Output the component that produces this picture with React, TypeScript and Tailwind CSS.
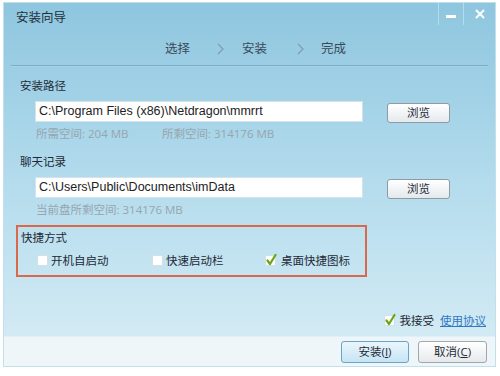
import React, { useState } from 'react';

const font = { fontFamily: '"Open Sans", "Noto Sans CJK SC", sans-serif' };

const CheckBox: React.FC<{ checked: boolean; onClick: () => void }> = ({ checked, onClick }) => (
  <span
    onClick={onClick}
    className="relative inline-block w-[11px] h-[11px] bg-white border border-[#d5e0e6] shadow-[inset_0_0_1px_#dfe7ec]"
  >
    {checked && (
      <svg className="absolute -left-[1px] -top-[3px]" width="13" height="14" viewBox="0 0 13 14">
        <path d="M2.5 7.5 L5 11 L10.5 2" fill="none" stroke="#6aa617" strokeWidth="2.2" strokeLinecap="round" strokeLinejoin="round" />
      </svg>
    )}
  </span>
);

const BrowseButton: React.FC = () => (
  <button className="w-[63px] h-[20px] rounded-[3px] border border-[#8c9ba6] bg-gradient-to-b from-white to-[#e4e9ed] text-[11.5px] text-[#1e2a36] leading-none shadow-[inset_0_1px_0_#fff]">
    浏览
  </button>
);

const Chevron: React.FC = () => (
  <svg width="7" height="12" viewBox="0 0 7 12">
    <path d="M1 1 L6 6 L1 11" fill="none" stroke="#7f9aab" strokeWidth="1.1" />
  </svg>
);

const PathField: React.FC<{ value: string }> = ({ value }) => (
  <div className="ml-[15px] w-[328px] h-[21px] bg-white border border-[#d3e3ea] pl-[3px] font-['Liberation_Sans','Noto_Sans_CJK_SC',sans-serif] text-[12.5px] leading-[19px] text-[#222]">
    {value}
  </div>
);

const App: React.FC = () => {
  const [autoStart, setAutoStart] = useState(false);
  const [quickLaunch, setQuickLaunch] = useState(false);
  const [desktop, setDesktop] = useState(true);
  const [accept, setAccept] = useState(true);

  return (
    <div className="w-[500px] h-[376px] bg-white pt-[2px] pl-[3px]" style={font}>
      <div className="w-[493px] h-[365px] flex flex-col bg-gradient-to-b from-[#8ec6df] via-[#b4dced] to-[#d8edf5] border border-[#c2dfec]">
        {/* title bar */}
        <div className="flex justify-between h-[30px]">
          <div className="pl-[12px] pt-[7px] text-[12.5px] text-[#22303c] leading-[16px]">安装向导</div>
          <div className="flex h-[22px]">
            <div className="w-[25px] flex items-center justify-center border-l border-[#b5dcec]">
              <div className="w-[10px] h-[3px] bg-white mt-[4px]" />
            </div>
            <div className="w-[32px] flex items-center justify-center border-l border-[#b5dcec]">
              <svg width="10" height="10" viewBox="0 0 10 10">
                <path d="M1 1 L9 9 M9 1 L1 9" stroke="white" strokeWidth="2" />
              </svg>
            </div>
          </div>
        </div>

        {/* steps */}
        <div className="flex items-center h-[32px] pl-[161px] text-[12.5px] text-[#3a4a58]">
          <span className="w-[25px]">选择</span>
          <span className="ml-[27px] flex"><Chevron /></span>
          <span className="ml-[18px]">安装</span>
          <span className="ml-[30px] flex"><Chevron /></span>
          <span className="ml-[17px]">完成</span>
        </div>
        <div className="mx-[7px] h-[1px] bg-[#79adc8] shadow-[0_1px_0_#a9d3e6]" />

        {/* content */}
        <div className="pl-[16px] flex-1 flex flex-col">
          <div className="mt-[12px] text-[11.5px] leading-[16px] text-[#1e2a36]">安装路径</div>
          <div className="mt-[5px] flex items-center">
            <PathField value="C:\Program Files (x86)\Netdragon\mmrrt" />
            <div className="ml-[24px]">
              <BrowseButton />
            </div>
          </div>
          <div className="mt-[3px] ml-[16px] flex text-[11.5px] leading-[16px] text-[#97a5af]">
            <span className="w-[126px]">所需空间: 204 MB</span>
            <span>所剩空间: 314176 MB</span>
          </div>

          <div className="mt-[12px] text-[11.5px] leading-[16px] text-[#1e2a36]">聊天记录</div>
          <div className="mt-[5px] flex items-center">
            <PathField value="C:\Users\Public\Documents\imData" />
            <div className="ml-[24px]">
              <BrowseButton />
            </div>
          </div>
          <div className="mt-[3px] ml-[16px] text-[11.5px] leading-[16px] text-[#97a5af]">当前盘所剩空间: 314176 MB</div>

          {/* shortcuts */}
          <div className="mt-[7px] ml-[-4px] w-[351px] h-[52px] border-2 border-[#d8694a] pt-[3px] pl-[3px]">
            <div className="text-[11.5px] leading-[16px] text-[#1e2a36]">快捷方式</div>
            <div className="mt-[6px] flex items-center text-[11.5px] text-[#1e2a36]">
              <span className="ml-[16px] flex items-center gap-[3px] w-[115px]">
                <CheckBox checked={autoStart} onClick={() => setAutoStart(!autoStart)} />
                开机自启动
              </span>
              <span className="flex items-center gap-[3px] w-[113px]">
                <CheckBox checked={quickLaunch} onClick={() => setQuickLaunch(!quickLaunch)} />
                快速启动栏
              </span>
              <span className="flex items-center gap-[5px]">
                <CheckBox checked={desktop} onClick={() => setDesktop(!desktop)} />
                桌面快捷图标
              </span>
            </div>
          </div>

          <div className="mt-auto mb-[7px] flex justify-end items-center pr-[9px] text-[11.5px] text-[#1e2a36]">
            <CheckBox checked={accept} onClick={() => setAccept(!accept)} />
            <span className="ml-[5px]">我接受</span>
            <a className="ml-[6px] text-[#2f78c4] underline">使用协议</a>
          </div>
        </div>

        {/* footer */}
        <div className="h-[30px] bg-[#eef6f9] border-t border-[#e2eff5] flex justify-end items-center pr-[8px] gap-[9px]">
          <button className="w-[68px] h-[22px] rounded-[3px] border border-[#6aa3c6] bg-gradient-to-b from-[#eaf6fc] to-[#c6e4f4] text-[11.5px] text-[#1e2a36] leading-none">
            安装(<span className="underline">I</span>)
          </button>
          <button className="w-[69px] h-[22px] rounded-[3px] border border-[#a0a7ad] bg-gradient-to-b from-white to-[#e6e9eb] text-[11.5px] text-[#1e2a36] leading-none">
            取消(<span className="underline">C</span>)
          </button>
        </div>
      </div>
    </div>
  );
};

export default App;
